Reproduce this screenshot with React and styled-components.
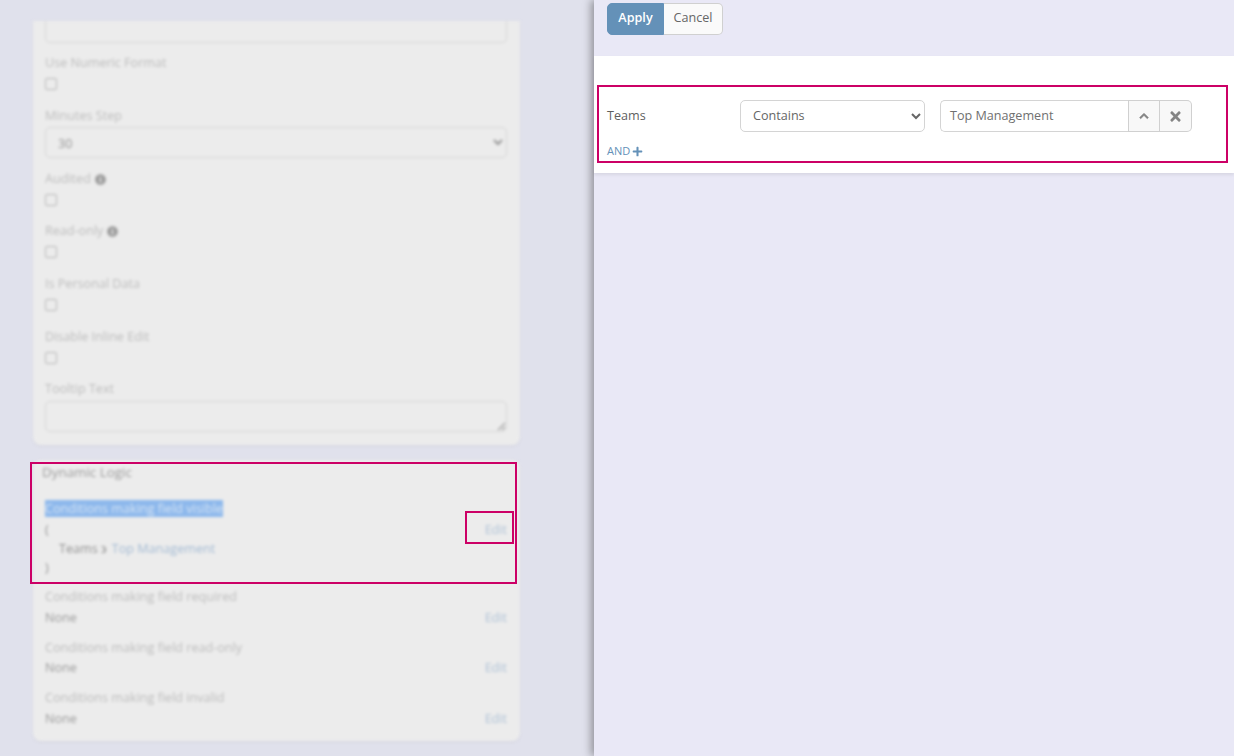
import React from 'react'
import styled, { createGlobalStyle } from 'styled-components'
import { FaChevronUp, FaInfoCircle, FaPlus, FaTimes } from 'react-icons/fa'

const GlobalStyle = createGlobalStyle`
  html, body {
    margin: 0;
    padding: 0;
    height: 100%;
    overflow: hidden;
    background: #e9e8f6;
    font-family: "Open Sans", "Liberation Sans", sans-serif;
    font-size: 12.6px;
    line-height: 20px;
    color: #555;
  }
  * { box-sizing: border-box; }
`

const Page = styled.div`
  display: flex;
  width: 1234px;
  height: 756px;
  overflow: hidden;
`

const LeftPane = styled.div`
  position: relative;
  width: 594px;
  flex: none;
  background: #e0e1ec;
  overflow: hidden;
`

const Blurred = styled.div`
  display: flex;
  flex-direction: column;
  gap: 15px;
  padding: 21px 74px 0 33px;
  filter: blur(1.4px);
`

const Card = styled.div`
  background: #ececec;
  border-radius: ${(p) => (p.$flatTop ? '0 0 8px 8px' : '8px')};
  box-shadow: 0 1px 3px rgba(0, 0, 0, 0.06);
  padding: 0 13px 13px 12px;
`

const CutInput = styled.div`
  height: 22px;
  border: 1px solid #d4d4d4;
  border-top: 0;
  border-radius: 0 0 5px 5px;
  margin-bottom: 9px;
`

const Label = styled.div`
  height: 20px;
  padding-top: 2px;
  color: #bcbcbc;
  display: flex;
  align-items: center;
  gap: 4px;
  margin-top: ${(p) => p.$top || 0}px;
`

const InfoIcon = styled(FaInfoCircle)`
  width: 11px;
  height: 11px;
  color: #9a9a9a;
`

const Check = styled.div`
  width: 12px;
  height: 12px;
  margin-top: 6px;
  border: 1px solid #b4b4b4;
  border-radius: 2px;
`

const FadedSelect = styled.select`
  display: block;
  width: 100%;
  height: 31px;
  margin-top: 2px;
  padding: 2px 8px 0;
  background: #ececec;
  border: 1px solid #d4d4d4;
  border-radius: 5px;
  color: #949494;
  font: inherit;
  opacity: 1;
`

const TextArea = styled.textarea`
  display: block;
  width: 100%;
  height: 31px;
  margin-top: 3px;
  background: #ececec;
  border: 1px solid #d4d4d4;
  border-radius: 5px;
`

const LogicTitle = styled.div`
  font-size: 13.4px;
  height: 20px;
  color: #9c9c9c;
  margin-left: -3px;
  padding-top: 2px;
`

const LogicRow = styled.div`
  display: flex;
  align-items: flex-start;
  justify-content: space-between;
  height: ${(p) => (p.$free ? 'auto' : '20px')};
  padding-top: 1px;
  margin-top: ${(p) => p.$top || 0}px;
`

const LogicText = styled.div`
  color: #9a9a9a;
`

const Highlighted = styled.span`
  background: #8db8ec;
  color: #d6e4f4;
`

const CodeLine = styled.div`
  height: 19px;
  padding-left: ${(p) => (p.$indent ? 14 : 0)}px;
  color: #909090;
`

const FadedLink = styled.span`
  color: #a3bad3;
  margin-left: 2px;
`

const EditLink = styled.span`
  color: #afc2d6;
`

const Annotation = styled.div`
  position: absolute;
  left: ${(p) => p.$x}px;
  top: ${(p) => p.$y}px;
  width: ${(p) => p.$w}px;
  height: ${(p) => p.$h}px;
  border: 2px solid #cc0066;
`

const RightPane = styled.div`
  position: relative;
  flex: 1;
  background: #e9e8f6;
  box-shadow: -3px 0 8px rgba(0, 0, 0, 0.35);
`

const ButtonBar = styled.div`
  display: flex;
  height: 56px;
  padding: 3px 0 0 13px;
`

const Button = styled.button`
  height: 32px;
  padding: 0 0 3px;
  width: ${(p) => (p.$primary ? 57 : 59)}px;
  font: inherit;
  font-weight: ${(p) => (p.$primary ? 600 : 400)};
  color: ${(p) => (p.$primary ? '#fff' : '#666')};
  background: ${(p) => (p.$primary ? '#6491b8' : '#fafafa')};
  border: 1px solid ${(p) => (p.$primary ? '#6491b8' : '#d0d0d0')};
  border-left-width: ${(p) => (p.$primary ? 1 : 0)}px;
  border-radius: ${(p) => (p.$primary ? '5px 0 0 5px' : '0 5px 5px 0')};
`

const WhitePanel = styled.div`
  background: #fff;
  height: 117px;
  padding: 29px 6px 0 3px;
  box-shadow: 0 2px 3px rgba(0, 0, 0, 0.08);
`

const FilterBox = styled.div`
  height: 78px;
  border: 2px solid #cc0066;
  padding: 13px 8px 0 8px;
`

const FilterRow = styled.div`
  display: grid;
  grid-template-columns: 118px 185px 252px;
  column-gap: 15px;
  align-items: center;
`

const FieldName = styled.div`
  color: #5f5f5f;
`

const OperatorSelect = styled.select`
  height: 32px;
  width: 185px;
  padding: 0 8px 1px;
  background: #fff;
  border: 1px solid #d4d4d4;
  border-radius: 5px;
  color: #666;
  font: inherit;
`

const InputGroup = styled.div`
  display: flex;
  height: 32px;
`

const ValueBox = styled.div`
  flex: 1;
  display: flex;
  align-items: center;
  padding-left: 9px;
  border: 1px solid #d4d4d4;
  border-right: 0;
  border-radius: 5px 0 0 5px;
  color: #707070;
`

const IconButton = styled.div`
  width: ${(p) => p.$w}px;
  display: flex;
  align-items: center;
  justify-content: center;
  background: #f8f8f8;
  border: 1px solid #d0d0d0;
  border-left-width: ${(p) => (p.$last ? 0 : 1)}px;
  border-radius: ${(p) => (p.$last ? '0 5px 5px 0' : 0)};
  color: #858585;
`

const AndLink = styled.div`
  display: flex;
  align-items: center;
  gap: 2px;
  margin-top: 9px;
  height: 20px;
  font-size: 11px;
  color: #6491b8;
`

const Field = ({ label, top, info }) => (
  <>
    <Label $top={top}>
      {label}
      {info && <InfoIcon />}
    </Label>
    <Check />
  </>
)

const Condition = ({ title, top, gap }) => (
  <>
    <Label $top={top}>{title}</Label>
    <LogicRow $top={gap}>
      <LogicText>None</LogicText>
      <EditLink>Edit</EditLink>
    </LogicRow>
  </>
)

const App = () => {
  return (
    <Page>
      <GlobalStyle />
      <LeftPane>
        <Blurred>
          <Card $flatTop>
            <CutInput />
            <Field label="Use Numeric Format" />
            <Label $top={15}>Minutes Step</Label>
            <FadedSelect defaultValue="30">
              <option>30</option>
            </FadedSelect>
            <Field label="Audited" top={10} info />
            <Field label="Read-only" top={14} info />
            <Field label="Is Personal Data" top={15} />
            <Field label="Disable Inline Edit" top={15} />
            <Label $top={14}>Tooltip Text</Label>
            <TextArea />
          </Card>
          <Card>
            <LogicTitle>Dynamic Logic</LogicTitle>
            <LogicRow $top={18}>
              <LogicText>
                <Highlighted>Conditions making field visible</Highlighted>
              </LogicText>
            </LogicRow>
            <LogicRow $top={1} $free>
              <div>
                <CodeLine>(</CodeLine>
                <CodeLine $indent>
                  Teams ϶ <FadedLink>Top Management</FadedLink>
                </CodeLine>
                <CodeLine>)</CodeLine>
              </div>
              <EditLink>Edit</EditLink>
            </LogicRow>
            <Condition title="Conditions making field required" top={9} gap={1} />
            <Condition title="Conditions making field read-only" top={10} />
            <Condition title="Conditions making field invalid" top={10} gap={1} />
          </Card>
        </Blurred>
        <Annotation $x={30} $y={462} $w={487} $h={122} />
        <Annotation $x={465} $y={511} $w={49} $h={33} />
      </LeftPane>
      <RightPane>
        <ButtonBar>
          <Button $primary>Apply</Button>
          <Button>Cancel</Button>
        </ButtonBar>
        <WhitePanel>
          <FilterBox>
            <FilterRow>
              <FieldName>Teams</FieldName>
              <OperatorSelect defaultValue="Contains">
                <option>Contains</option>
              </OperatorSelect>
              <InputGroup>
                <ValueBox>Top Management</ValueBox>
                <IconButton $w={32}>
                  <FaChevronUp size={10} stroke="currentColor" strokeWidth={30} />
                </IconButton>
                <IconButton $w={32} $last>
                  <FaTimes size={15} />
                </IconButton>
              </InputGroup>
            </FilterRow>
            <AndLink>
              AND <FaPlus size={11} />
            </AndLink>
          </FilterBox>
        </WhitePanel>
      </RightPane>
    </Page>
  )
}

export default App
